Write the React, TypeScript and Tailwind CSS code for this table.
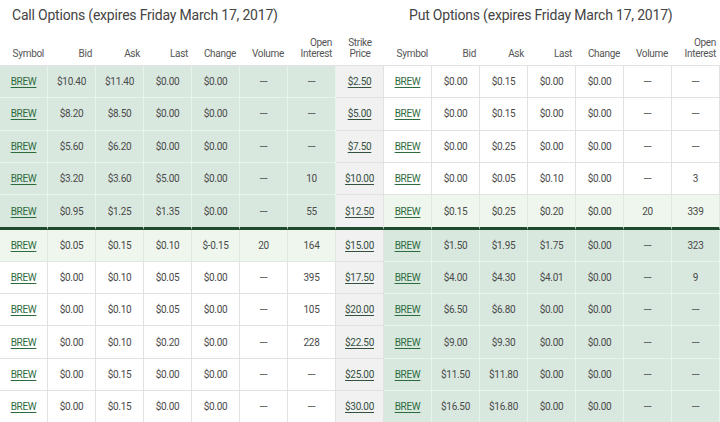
const rows = [
  { strike: "$2.50", call: ["$10.40", "$11.40", "$0.00", "$0.00", "---", "---"], put: ["$0.00", "$0.15", "$0.00", "$0.00", "---", "---"] },
  { strike: "$5.00", call: ["$8.20", "$8.50", "$0.00", "$0.00", "---", "---"], put: ["$0.00", "$0.15", "$0.00", "$0.00", "---", "---"] },
  { strike: "$7.50", call: ["$5.60", "$6.20", "$0.00", "$0.00", "---", "---"], put: ["$0.00", "$0.25", "$0.00", "$0.00", "---", "---"] },
  { strike: "$10.00", call: ["$3.20", "$3.60", "$5.00", "$0.00", "---", "10"], put: ["$0.00", "$0.05", "$0.10", "$0.00", "---", "3"] },
  { strike: "$12.50", call: ["$0.95", "$1.25", "$1.35", "$0.00", "---", "55"], put: ["$0.15", "$0.25", "$0.20", "$0.00", "20", "339"] },
  { strike: "$15.00", call: ["$0.05", "$0.15", "$0.10", "$-0.15", "20", "164"], put: ["$1.50", "$1.95", "$1.75", "$0.00", "---", "323"] },
  { strike: "$17.50", call: ["$0.00", "$0.10", "$0.05", "$0.00", "---", "395"], put: ["$4.00", "$4.30", "$4.01", "$0.00", "---", "9"] },
  { strike: "$20.00", call: ["$0.00", "$0.10", "$0.05", "$0.00", "---", "105"], put: ["$6.50", "$6.80", "$0.00", "$0.00", "---", "---"] },
  { strike: "$22.50", call: ["$0.00", "$0.10", "$0.20", "$0.00", "---", "228"], put: ["$9.00", "$9.30", "$0.00", "$0.00", "---", "---"] },
  { strike: "$25.00", call: ["$0.00", "$0.15", "$0.00", "$0.00", "---", "---"], put: ["$11.50", "$11.80", "$0.00", "$0.00", "---", "---"] },
  { strike: "$30.00", call: ["$0.00", "$0.15", "$0.00", "$0.00", "---", "---"], put: ["$16.50", "$16.80", "$0.00", "$0.00", "---", "---"] },
];

const tones = {
  itm: "bg-[#d9e8df] border-[#eaf2ed]",
  near: "bg-[#eef6ed] border-[#e0e9df]",
  otm: "bg-white border-[#e2e2e2]",
  strike: "bg-[#f1f1f1] border-[#e2e2e2]",
};

type Tone = keyof typeof tones;

function callTone(i: number): Tone {
  if (i < 5) return "itm";
  if (i === 5) return "near";
  return "otm";
}

function putTone(i: number): Tone {
  if (i < 4) return "otm";
  if (i === 4) return "near";
  return "itm";
}

function Header({ children, center }: { children: React.ReactNode; center?: boolean }) {
  return (
    <th
      className={`h-[32px] border-b border-[#e2e2e2] pb-[6px] align-bottom text-[10px] leading-[11px] font-normal tracking-[-0.3px] text-[#555] ${
        center ? "text-center" : "pr-1 text-right"
      }`}
    >
      {children}
    </th>
  );
}

function Cell({ tone, split, children }: { tone: Tone; split: boolean; children: React.ReactNode }) {
  return (
    <td
      className={`border-r text-center align-middle text-[10px] tracking-[-0.3px] text-[#4a4a4a] ${tones[tone]} ${
        split ? "h-[34.4px] border-b-[3px] border-b-[#1f4a2d] pt-[2px]" : "h-[32.3px] border-b"
      }`}
    >
      {children}
    </td>
  );
}

function Side({ values, tone, split }: { values: string[]; tone: Tone; split: boolean }) {
  return (
    <>
      <Cell tone={tone} split={split}>
        <a href="#" className="text-[#2d6b3d] underline underline-offset-2">
          BREW
        </a>
      </Cell>
      {values.map((v, j) => (
        <Cell key={j} tone={tone} split={split}>
          {v}
        </Cell>
      ))}
    </>
  );
}

const heads = ["Symbol", "Bid", "Ask", "Last", "Change", "Volume"];

export default function App() {
  return (
    <div className="h-[422px] w-[720px] overflow-hidden bg-white font-['Roboto',sans-serif]">
      <div className="flex h-[34px] items-center pb-1 text-[14px] tracking-[-0.2px] text-[#444]">
        <div className="w-[397px] pl-3">Call Options (expires Friday March 17, 2017)</div>
        <div className="pl-3">Put Options (expires Friday March 17, 2017)</div>
      </div>
      <table className="w-[720px] table-fixed border-separate border-spacing-0">
        <colgroup>
          {Array.from({ length: 15 }).map((_, i) => (
            <col key={i} className="w-[48px]" />
          ))}
        </colgroup>
        <thead>
          <tr>
            {heads.map((h) => (
              <Header key={"c" + h}>{h}</Header>
            ))}
            <Header>
              Open
              <br />
              Interest
            </Header>
            <Header center>
              Strike
              <br />
              Price
            </Header>
            {heads.map((h) => (
              <Header key={"p" + h}>{h}</Header>
            ))}
            <Header>
              Open
              <br />
              Interest
            </Header>
          </tr>
        </thead>
        <tbody>
          {rows.map((r, i) => {
            const split = i === 4;
            return (
              <tr key={r.strike}>
                <Side values={r.call} tone={callTone(i)} split={split} />
                <Cell tone="strike" split={split}>
                  <a href="#" className="text-[#34503f] underline underline-offset-2">
                    {r.strike}
                  </a>
                </Cell>
                <Side values={r.put} tone={putTone(i)} split={split} />
              </tr>
            );
          })}
        </tbody>
      </table>
    </div>
  );
}
